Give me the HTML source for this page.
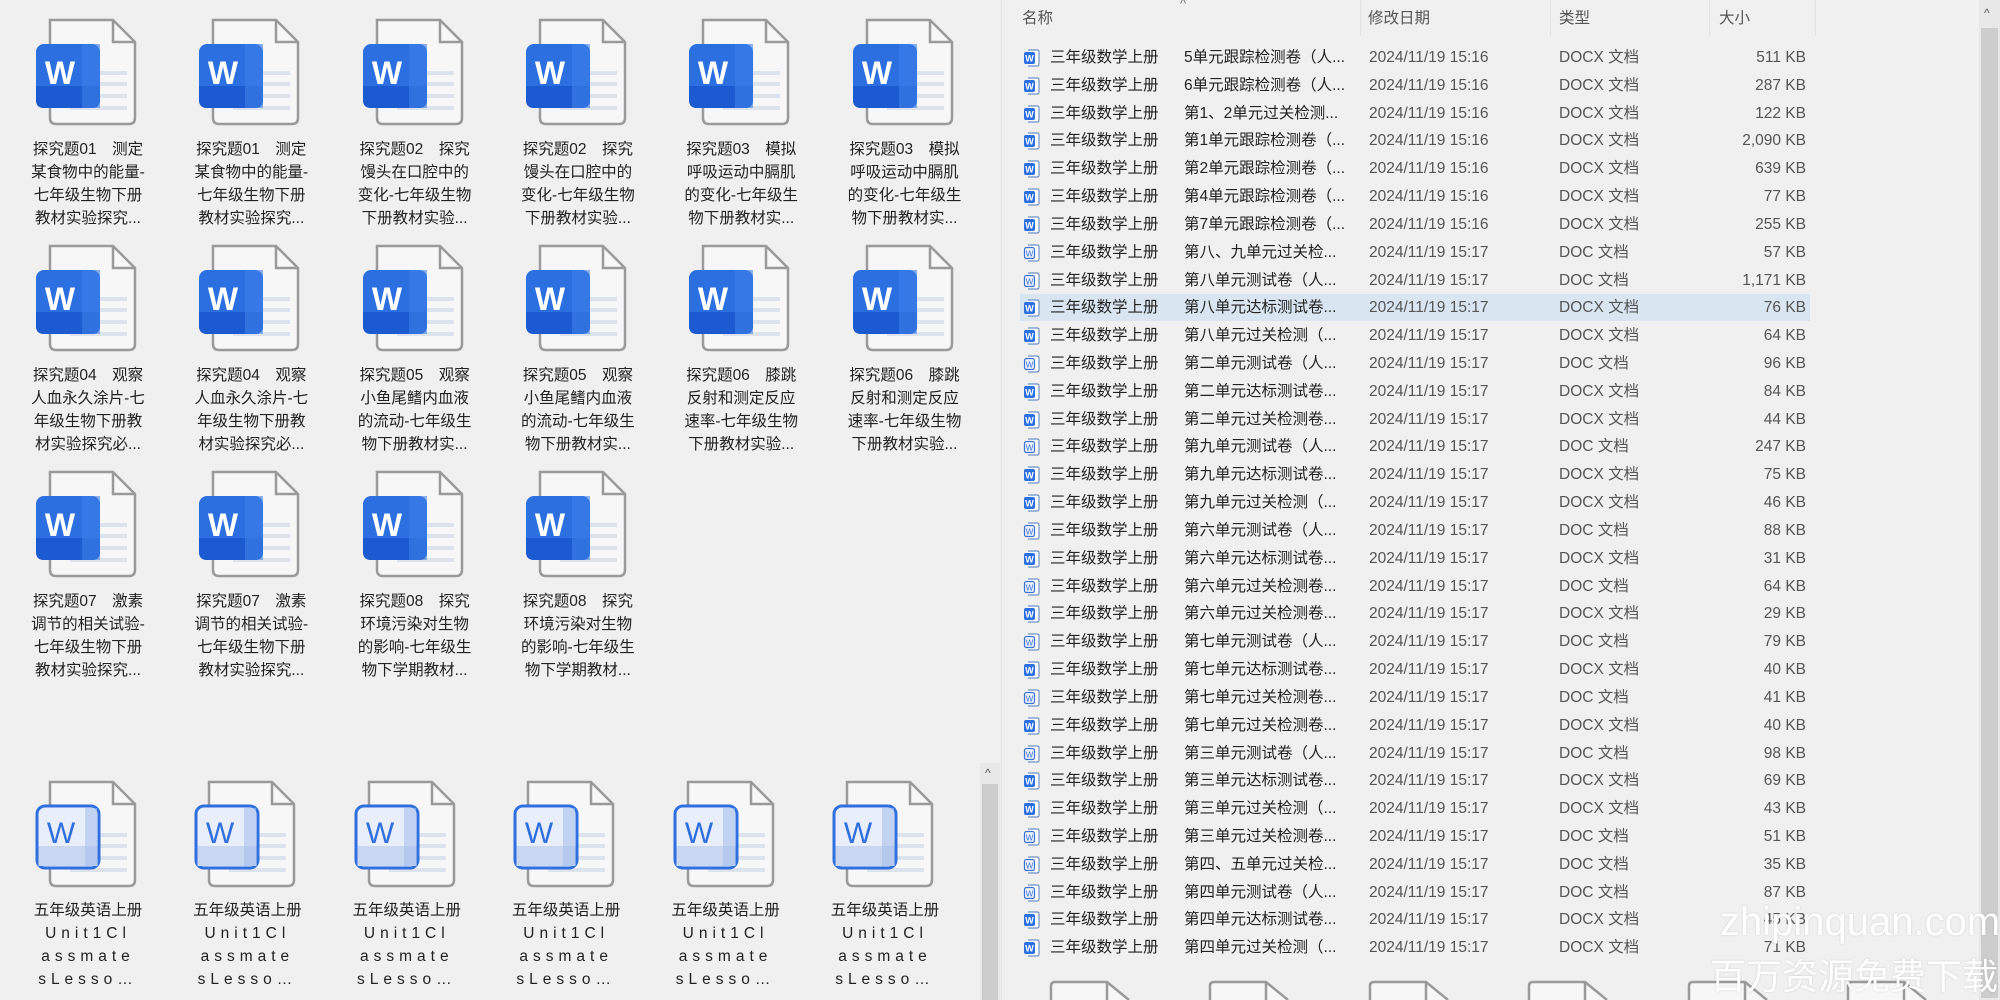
<!DOCTYPE html>
<html><head><meta charset="utf-8">
<style>
body{margin:0;width:2000px;height:1000px;overflow:hidden;background:#f0f0f0;font-family:"Liberation Sans","Noto Sans CJK SC",sans-serif;position:relative}
.a{position:absolute}
.lbl{position:absolute;width:130px;text-align:center;font-size:15.5px;line-height:23px;color:#222;white-space:nowrap}
.row{position:absolute;left:1020px;width:790px;height:27px;font-size:15.5px;color:#222;line-height:27px}
.row span{position:absolute;top:0;white-space:nowrap}
.hd{position:absolute;top:6px;font-size:15.5px;color:#555}
.sep{position:absolute;top:0;width:1px;height:36px;background:#e2e2e2}
</style></head><body>
<div id="root"></div>
<div class="a" style="left:1001px;top:0;width:1px;height:1000px;background:#e4e4e4"></div>
<div class="hd" style="left:1022px">名称</div>
<div class="a" style="left:1180px;top:-4px;font-size:13px;color:#777">^</div>
<div class="hd" style="left:1368px">修改日期</div>
<div class="hd" style="left:1559px">类型</div>
<div class="hd" style="left:1719px">大小</div>
<div class="sep" style="left:1360px"></div><div class="sep" style="left:1550px"></div><div class="sep" style="left:1709px"></div><div class="sep" style="left:1815px"></div>
<div class="a" style="left:1979px;top:0;width:21px;height:1000px;background:#e8e8e8"></div>
<div class="a" style="left:1981px;top:28px;width:17px;height:970px;background:#cdcdcd"></div>
<div class="a" style="left:1984px;top:6px;font-size:12px;color:#555">^</div>
<div class="a" style="left:980px;top:763px;width:20px;height:237px;background:#e8e8e8"></div>
<div class="a" style="left:982px;top:784px;width:16px;height:216px;background:#cdcdcd"></div>
<div class="a" style="left:985px;top:766px;font-size:12px;color:#555">^</div>
<div class="a" style="left:1720px;top:900px;font-size:40px;color:#fff;font-family:'Liberation Sans',sans-serif;text-shadow:0 0 2px rgba(0,0,0,.15)">zhipinquan.com</div>
<div class="a" style="left:1710px;top:948px;font-size:36px;color:#fff;text-shadow:0 0 2px rgba(0,0,0,.15)">百万资源免费下载</div>
<script>
function icon(x,y,light){
 var s='<svg class="a" style="left:'+x+'px;top:'+y+'px" width="110" height="115" viewBox="0 0 110 115">'+
 '<path d="M15 6 H78 L100 28 V104 Q100 110 94 110 H21 Q15 110 15 104 Z" fill="#f7f7f7" stroke="#9a9a9a" stroke-width="2.5"/>'+
 '<path d="M78 6 V28 H100" fill="none" stroke="#9a9a9a" stroke-width="2.5"/>'+
 '<rect x="62" y="57" width="30" height="4" fill="#dde3ec"/><rect x="62" y="68" width="30" height="4" fill="#dde3ec"/><rect x="62" y="80" width="30" height="4" fill="#dde3ec"/><rect x="35" y="92" width="57" height="4" fill="#dde3ec"/>';
 if(!light){s+='<rect x="1" y="30" width="64" height="64" rx="8" fill="#2b6fe0"/><path d="M1 72 H65 V86 Q65 94 57 94 H9 Q1 94 1 86Z" fill="#1b5ad0"/><rect x="47" y="30" width="18" height="64" rx="0" fill="#3d80ea" opacity=".6"/><text x="25" y="70" font-family="Liberation Sans" font-weight="bold" font-size="32" fill="#fff" text-anchor="middle">W</text>';}
 else{s+='<rect x="2" y="30" width="62" height="62" rx="8" fill="#e8eefa" stroke="#2f6fde" stroke-width="3"/><rect x="3.5" y="70" width="59" height="20" fill="#c9d6f1"/><rect x="50" y="32" width="12" height="58" fill="#a9c0ee" opacity=".6"/><text x="26" y="67" font-family="Liberation Sans" font-size="30" fill="#2f6fde" text-anchor="middle">W</text>';}
 return s+'</svg>';
}
var h='';
var L=[["探究题01　测定","某食物中的能量-","七年级生物下册","教材实验探究..."],["探究题01　测定","某食物中的能量-","七年级生物下册","教材实验探究..."],["探究题02　探究","馒头在口腔中的","变化-七年级生物","下册教材实验..."],["探究题02　探究","馒头在口腔中的","变化-七年级生物","下册教材实验..."],["探究题03　模拟","呼吸运动中膈肌","的变化-七年级生","物下册教材实..."],["探究题03　模拟","呼吸运动中膈肌","的变化-七年级生","物下册教材实..."],
["探究题04　观察","人血永久涂片-七","年级生物下册教","材实验探究必..."],["探究题04　观察","人血永久涂片-七","年级生物下册教","材实验探究必..."],["探究题05　观察","小鱼尾鳍内血液","的流动-七年级生","物下册教材实..."],["探究题05　观察","小鱼尾鳍内血液","的流动-七年级生","物下册教材实..."],["探究题06　膝跳","反射和测定反应","速率-七年级生物","下册教材实验..."],["探究题06　膝跳","反射和测定反应","速率-七年级生物","下册教材实验..."],
["探究题07　激素","调节的相关试验-","七年级生物下册","教材实验探究..."],["探究题07　激素","调节的相关试验-","七年级生物下册","教材实验探究..."],["探究题08　探究","环境污染对生物","的影响-七年级生","物下学期教材..."],["探究题08　探究","环境污染对生物","的影响-七年级生","物下学期教材..."]];
L.forEach(function(t,i){var c=i%6,r=Math.floor(i/6);var cx=88+c*163.3,y=14+r*226;h+=icon(cx-53,y,false);h+='<div class="lbl" style="left:'+(cx-65)+'px;top:'+(y+124)+'px">'+t.join('<br>')+'</div>';});
for(var c=0;c<6;c++){var cx=88+c*159.4;h+=icon(cx-53,776,true);h+='<div class="lbl" style="left:'+(cx-65)+'px;top:899px;letter-spacing:0">五年级英语上册<br><span style="letter-spacing:5px">Unit1Cl</span><br><span style="letter-spacing:5px">assmate</span><br><span style="letter-spacing:5px">sLesso…</span></div>';}
for(var c=0;c<6;c++){h+='<svg class="a" style="left:'+(1049+c*159.4)+'px;top:980px" width="100" height="20"><path d="M2 20 V6 Q2 2 6 2 H58 L80 20" fill="#f7f7f7" stroke="#9a9a9a" stroke-width="2.5"/><path d="M58 2 V20" stroke="#9a9a9a" stroke-width="2.5"/></svg>';}
var R=[["5单元跟踪检测卷（人...",16,"X","511 KB"],["6单元跟踪检测卷（人...",16,"X","287 KB"],["第1、2单元过关检测...",16,"X","122 KB"],["第1单元跟踪检测卷（...",16,"X","2,090 KB"],["第2单元跟踪检测卷（...",16,"X","639 KB"],["第4单元跟踪检测卷（...",16,"X","77 KB"],["第7单元跟踪检测卷（...",16,"X","255 KB"],["第八、九单元过关检...",17,"","57 KB"],["第八单元测试卷（人...",17,"","1,171 KB"],["第八单元达标测试卷...",17,"X","76 KB"],["第八单元过关检测（...",17,"X","64 KB"],["第二单元测试卷（人...",17,"","96 KB"],["第二单元达标测试卷...",17,"X","84 KB"],["第二单元过关检测卷...",17,"X","44 KB"],["第九单元测试卷（人...",17,"","247 KB"],["第九单元达标测试卷...",17,"X","75 KB"],["第九单元过关检测（...",17,"X","46 KB"],["第六单元测试卷（人...",17,"","88 KB"],["第六单元达标测试卷...",17,"X","31 KB"],["第六单元过关检测卷...",17,"","64 KB"],["第六单元过关检测卷...",17,"X","29 KB"],["第七单元测试卷（人...",17,"","79 KB"],["第七单元达标测试卷...",17,"X","40 KB"],["第七单元过关检测卷...",17,"","41 KB"],["第七单元过关检测卷...",17,"X","40 KB"],["第三单元测试卷（人...",17,"","98 KB"],["第三单元达标测试卷...",17,"X","69 KB"],["第三单元过关检测（...",17,"X","43 KB"],["第三单元过关检测卷...",17,"","51 KB"],["第四、五单元过关检...",17,"","35 KB"],["第四单元测试卷（人...",17,"","87 KB"],["第四单元达标测试卷...",17,"X","45 KB"],["第四单元过关检测（...",17,"X","71 KB"]];
R.forEach(function(r,i){var y=44+i*27.82;var bg=i==9?'background:#d9e6f2;':'';var ic=r[2]?'<svg class="a" style="left:3px;top:5px" width="18" height="18"><path d="M5 1 H14 Q16 1 16 3 V15 Q16 17 14 17 H5" fill="#fff" stroke="#6d8fc4" stroke-width="1.2"/><rect x="1" y="3" width="11" height="12" rx="2" fill="#2b6fe0"/><text x="6.5" y="12.5" font-size="9" font-weight="bold" fill="#fff" text-anchor="middle" font-family="Liberation Sans">W</text></svg>':'<svg class="a" style="left:3px;top:5px" width="18" height="18"><path d="M5 1 H14 Q16 1 16 3 V15 Q16 17 14 17 H5" fill="#fff" stroke="#6d8fc4" stroke-width="1.2"/><rect x="1.5" y="3.5" width="10" height="11" rx="2" fill="#eaf0fb" stroke="#3b72d6" stroke-width="1.2"/><text x="6.5" y="12.5" font-size="8" fill="#3b72d6" text-anchor="middle" font-family="Liberation Sans">W</text></svg>';
h+='<div class="row" style="top:'+y+'px;'+bg+'">'+ic+'<span style="left:30px">三年级数学上册</span><span style="left:164px">'+r[0]+'</span><span style="left:349px;color:#555">2024/11/19 15:'+r[1]+'</span><span style="left:539px;color:#555">DOC'+r[2]+' 文档</span><span style="right:4px;color:#555">'+r[3]+'</span></div>';});
document.getElementById('root').innerHTML=h;
</script>
</body></html>
